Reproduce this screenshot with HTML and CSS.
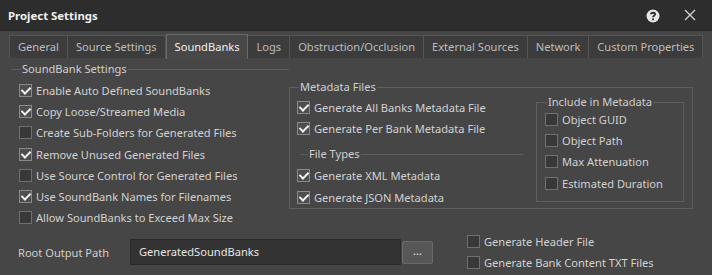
FILE: index.html
```html
<!DOCTYPE html>
<html>
<head>
<meta charset="utf-8">
<link rel="stylesheet" href="styles.css">
</head>
<body>
<div class="window">
  <div class="titlebar">
    <span class="title">Project Settings</span>
    <div class="title-icons">
      <svg class="help" width="14" height="14" viewBox="0 0 14 14"><circle cx="7" cy="7" r="6.5" fill="#e6e6e6"/><path d="M4.9 5.3 C4.9 3.2 9.1 3.2 9.1 5.3 C9.1 6.7 7 6.6 7 8.2" fill="none" stroke="#2d2d2d" stroke-width="1.8"/><rect x="6.1" y="9.4" width="1.8" height="1.8" fill="#2d2d2d"/></svg>
      <svg class="close" width="12" height="12" viewBox="0 0 12 12"><path d="M1 1 L11 11 M11 1 L1 11" stroke="#cfcfcf" stroke-width="1.4"/></svg>
    </div>
  </div>
  <div class="tabbar">
    <div class="tab">General</div>
    <div class="tab">Source Settings</div>
    <div class="tab active">SoundBanks</div>
    <div class="tab">Logs</div>
    <div class="tab">Obstruction/Occlusion</div>
    <div class="tab">External Sources</div>
    <div class="tab">Network</div>
    <div class="tab">Custom Properties</div>
  </div>
  <div class="content">
    <div class="top">
      <fieldset class="group-line left-group">
        <legend>SoundBank Settings</legend>
        <div class="rows">
          <label class="cb"><span class="box on"></span>Enable Auto Defined SoundBanks</label>
          <label class="cb"><span class="box on"></span>Copy Loose/Streamed Media</label>
          <label class="cb"><span class="box"></span>Create Sub-Folders for Generated Files</label>
          <label class="cb"><span class="box on"></span>Remove Unused Generated Files</label>
          <label class="cb"><span class="box"></span>Use Source Control for Generated Files</label>
          <label class="cb"><span class="box on"></span>Use SoundBank Names for Filenames</label>
          <label class="cb"><span class="box"></span>Allow SoundBanks to Exceed Max Size</label>
        </div>
      </fieldset>
      <fieldset class="group-box meta">
        <legend>Metadata Files</legend>
        <div class="meta-grid">
          <div class="meta-left">
            <label class="cb"><span class="box on"></span>Generate All Banks Metadata File</label>
            <label class="cb"><span class="box on"></span>Generate Per Bank Metadata File</label>
            <fieldset class="group-line filetypes">
              <legend>File Types</legend>
              <label class="cb"><span class="box on"></span>Generate XML Metadata</label>
              <label class="cb"><span class="box on"></span>Generate JSON Metadata</label>
            </fieldset>
          </div>
          <fieldset class="group-box include">
            <legend>Include in Metadata</legend>
            <label class="cb"><span class="box"></span>Object GUID</label>
            <label class="cb"><span class="box"></span>Object Path</label>
            <label class="cb"><span class="box"></span>Max Attenuation</label>
            <label class="cb"><span class="box"></span>Estimated Duration</label>
          </fieldset>
        </div>
      </fieldset>
    </div>
    <div class="bottom">
      <span class="path-label">Root Output Path</span>
      <div class="path-input">GeneratedSoundBanks</div>
      <div class="browse">...</div>
      <div class="bottom-checks">
        <label class="cb"><span class="box"></span>Generate Header File</label>
        <label class="cb"><span class="box"></span>Generate Bank Content TXT Files</label>
      </div>
    </div>
  </div>
</div>
</body>
</html>
```
FILE: styles.css
```css
* { box-sizing: border-box; }
html, body { margin: 0; padding: 0; }
body {
  width: 712px;
  height: 275px;
  overflow: hidden;
  background: #464646;
  font-family: "Noto Sans", "Open Sans", sans-serif;
  font-size: 11.1px;
  color: #d2d2d2;
}
.titlebar {
  height: 31px;
  background: #2d2d2d;
  border-bottom: 1px solid #262626;
  display: flex;
  align-items: center;
  justify-content: space-between;
  padding: 0 16px 0 8px;
}
.title {
  font-weight: bold;
  font-size: 11.4px;
  color: #f0f0f0;
}
.title-icons { display: flex; align-items: center; gap: 24px; }
.help { margin-top: 1px; }
.tabbar {
  display: flex;
  margin: 4px 13px 0 9px;
  border-bottom: 1px solid #5a5a5a;
  height: 23px;
}
.tab {
  flex: none;
  white-space: nowrap;
  height: 23px;
  padding: 0 8px;
  background: #3c3c3c;
  border: 1px solid #555;
  border-left: none;
  border-bottom: none;
  line-height: 22px;
  color: #bdbdbd;
}
.tab:first-child { border-left: 1px solid #555; }
.tab.active {
  height: 25px;
  margin-top: -1px;
  background: #484848;
  border: 1px solid #6a6a6a;
  border-bottom: none;
  color: #f0f0f0;
  line-height: 24px;
}
.content { padding: 0 19px 0 11px; }
.top {
  display: grid;
  grid-template-columns: 278px 1fr;
}
fieldset { margin: 0; min-width: 0; }
legend { padding: 0 1px; color: #cfcfcf; line-height: 14px; }
.group-line {
  border: none;
  border-top: 1px solid #5e5e5e;
  padding: 0;
}
.left-group { margin-top: 4px; }
.left-group legend { margin-left: 10px; }
.rows { padding: 4px 0 0 8px; }
.cb {
  display: flex;
  align-items: center;
  height: 21.2px;
  white-space: nowrap;
}
.box {
  width: 13px;
  height: 13px;
  border: 1px solid #707070;
  background: #383838;
  margin-right: 4px;
  flex: none;
  display: inline-block;
  position: relative;
}
.box.on {
  background: #4e4e4e;
  border-color: #8a8a8a;
}
.box.on::after {
  content: "";
  position: absolute;
  left: 3px;
  top: 0px;
  width: 4px;
  height: 7px;
  border-right: 2px solid #f2f2f2;
  border-bottom: 2px solid #f2f2f2;
  transform: rotate(45deg);
}
.group-box {
  border: 1px solid #5e5e5e;
  padding: 0;
}
.meta {
  margin-top: 22px;
  height: 129px;
}
.meta > legend { margin-left: 9px; }
.meta-grid {
  display: grid;
  grid-template-columns: 1fr 148px;
  column-gap: 13px;
  padding: 0 8px 0 7px;
}
.meta-left { padding-top: 3px; }
.meta-left .group-line { margin-top: 8px; }
.filetypes legend { margin-left: 8px; }
.filetypes { padding-top: 4px; margin-left: 3px; }
.filetypes .cb { margin-left: -3px; }
.include {
  margin-top: 1px;
  height: 107px;
  padding: 0 0 0 8px;
}
.include legend { margin-left: 2px; }
.bottom {
  display: flex;
  align-items: center;
  margin-top: 11px;
  height: 26px;
}
.path-label { margin-left: 7px; width: 112px; color: #cfcfcf; }
.path-input {
  width: 271px;
  height: 26px;
  background: #333;
  border: 1px solid #2a2a2a;
  padding-left: 8px;
  line-height: 24px;
  color: #e6e6e6;
}
.browse {
  width: 31px;
  height: 23px;
  margin-left: 1px;
  background: #575757;
  border: 1px solid #6a6a6a;
  border-radius: 2px;
  text-align: center;
  line-height: 18px;
  color: #eee;
  font-size: 11px;
}
.bottom-checks { margin-left: 34px; }
```
